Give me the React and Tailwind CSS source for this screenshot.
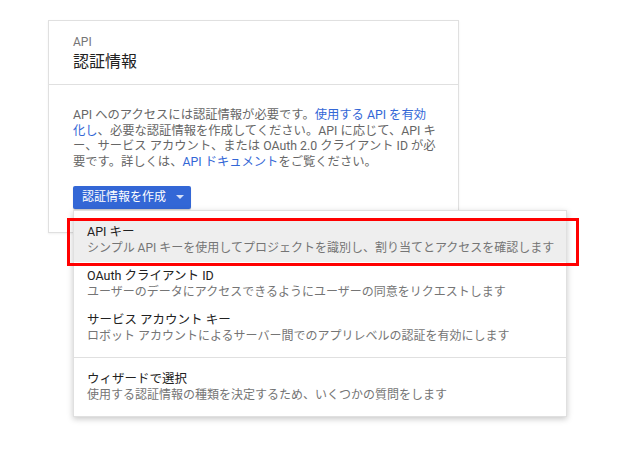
import React from "react";

const font = { fontFamily: 'Roboto, "Noto Sans CJK JP", sans-serif' };

function Item({ title, desc, active }) {
  return (
    <div className={`px-[13px] py-[5px] ${active ? "bg-[#eeeeee]" : ""}`}>
      <div className="text-[12.5px] leading-[17px] text-[#212121] whitespace-nowrap">{title}</div>
      <div className="text-[12px] leading-[17px] text-[#757575] whitespace-nowrap">{desc}</div>
    </div>
  );
}

export default function App() {
  return (
    <div className="w-[629px] h-[473px] bg-white relative" style={font}>
      <div className="pt-[20px] pl-[48px]">
        <div className="w-[411px] bg-white border border-[#e0e0e0] shadow-[0_1px_2px_rgba(0,0,0,0.06)]">
          <div className="px-6 pt-[13px] pb-[10px] border-b border-[#e0e0e0]">
            <div className="text-[12px] leading-[16px] text-[#757575]">API</div>
            <div className="text-[16px] leading-[24px] text-[#212121]">認証情報</div>
          </div>
          <div className="px-6 pt-[23px] pb-[23px]">
            <p className="text-[12.3px] leading-[15.7px] text-[#666666] whitespace-nowrap">
              API へのアクセスには認証情報が必要です。<span className="text-[#3367d6]">使用する API を有効<br />化し</span>、必要な認証情報を作成してください。API に応じて、API キ<br />
              ー、サービス アカウント、または OAuth 2.0 クライアント ID が必<br />
              要です。詳しくは、<span className="text-[#3367d6]">API ドキュメント</span>をご覧ください。
            </p>
            <div className="relative mt-[15px]">
              <button className="flex items-center h-[23px] w-[118px] bg-[#3367d6] rounded-[2px] pl-[9px] text-white text-[12px] shadow-[0_1px_1px_rgba(0,0,0,0.2)]">
                <span>認証情報を作成</span>
                <svg className="ml-[10px]" width="8" height="4" viewBox="0 0 8 4">
                  <path d="M0 0 L8 0 L4 4 Z" fill="#ffffff" fillOpacity="0.8" />
                </svg>
              </button>
              <div className="absolute left-0 top-[24px] w-[494px] bg-white border border-[#e0e0e0] shadow-[0_2px_6px_rgba(0,0,0,0.22)] z-10">
                <div className="py-[7px] relative">
                  <Item active title="API キー" desc="シンプル API キーを使用してプロジェクトを識別し、割り当てとアクセスを確認します" />
                  <Item title="OAuth クライアント ID" desc="ユーザーのデータにアクセスできるようにユーザーの同意をリクエストします" />
                  <Item title="サービス アカウント キー" desc="ロボット アカウントによるサーバー間でのアプリレベルの認証を有効にします" />
                  <div className="absolute left-[-7px] top-[7px] w-[512px] h-[48px] border-[3px] border-[#ff0000] pointer-events-none" />
                </div>
                <div className="border-t border-[#e0e0e0] py-[7px]">
                  <Item title="ウィザードで選択" desc="使用する認証情報の種類を決定するため、いくつかの質問をします" />
                </div>
              </div>
            </div>
          </div>
        </div>
      </div>
    </div>
  );
}
